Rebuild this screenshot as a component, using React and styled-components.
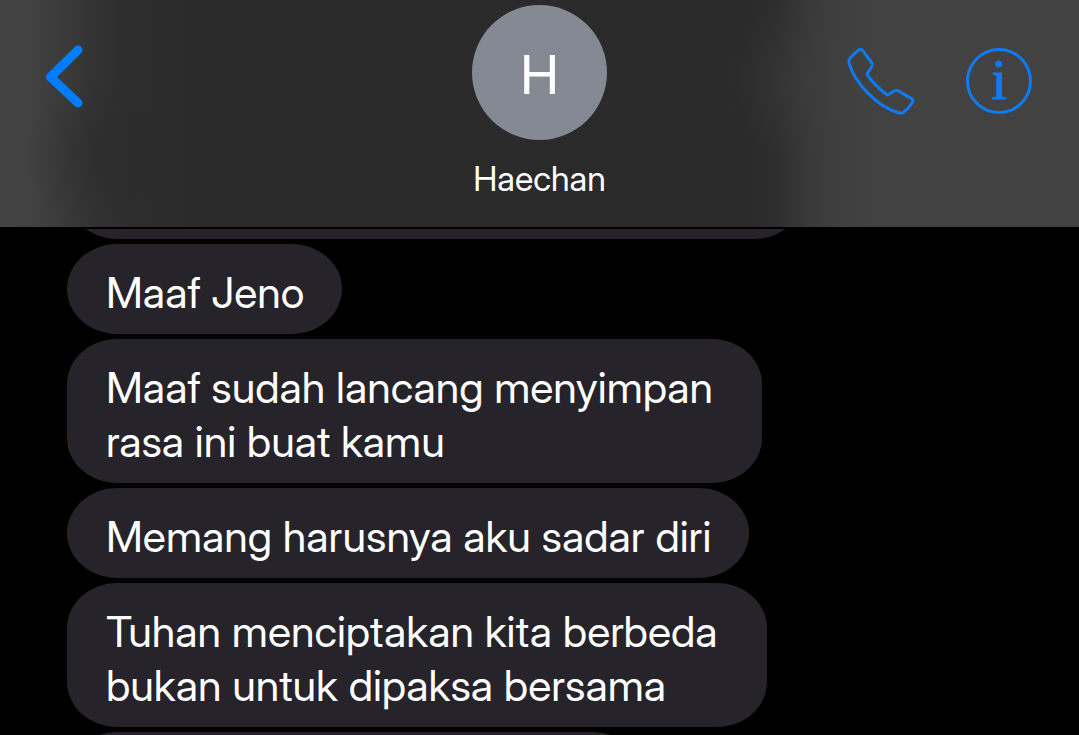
import styled, { createGlobalStyle } from "styled-components";

const GlobalStyle = createGlobalStyle`
  * {
    box-sizing: border-box;
  }

  body {
    margin: 0;
    background: #000000;
    font-family: "Inter Display", Inter, "Liberation Sans", sans-serif;
  }
`;

const StyledPage = styled.div`
  display: flex;
  flex-direction: column;
  height: 100vh;
  overflow: hidden;
  background: #000000;
  color: #ffffff;
`;

const StyledHeader = styled.header`
  position: sticky;
  top: 0;
  z-index: 1;
  display: grid;
  grid-template-columns: 1fr auto 1fr;
  align-items: start;
  flex-shrink: 0;
  padding: 5px 45px 0;
  height: 229px;
  border-bottom: 2px solid #000000;
  background: radial-gradient(
      70px 80px at 9% 68%,
      rgba(40, 40, 40, 0.4),
      rgba(40, 40, 40, 0)
    ),
    radial-gradient(
      80px 80px at 74% 36%,
      rgba(66, 66, 66, 0.35),
      rgba(66, 66, 66, 0)
    ),
    linear-gradient(
      90deg,
      #444444 0%,
      #414141 3%,
      #3a3a3a 6%,
      #323232 9%,
      #2d2d2d 12%,
      #2b2b2b 20%,
      #2a2a2a 69%,
      #2e2e2e 72%,
      #393939 75%,
      #404040 78%,
      #424242 82%
    );
`;

const StyledIconButton = styled.button`
  display: flex;
  padding: 0;
  border: none;
  background: none;
  color: #0f7bf2;
  cursor: pointer;
`;

const StyledBackArea = styled.div`
  padding-top: 37px;
`;

const StyledActions = styled.div`
  display: flex;
  justify-content: flex-end;
  gap: 46px;
  padding-top: 41px;
`;

const StyledContact = styled.div`
  display: flex;
  flex-direction: column;
  align-items: center;
  gap: 17px;
`;

const StyledAvatar = styled.div`
  display: flex;
  justify-content: center;
  align-items: center;
  width: 135px;
  height: 135px;
  padding-top: 4px;
  border-radius: 50%;
  background: #858993;
  font-family: Inter, "Liberation Sans", sans-serif;
  font-size: 54px;
`;

const StyledName = styled.h1`
  margin: 0;
  font-size: 34px;
  font-weight: 400;
  line-height: 44px;
`;

const StyledMessages = styled.main`
  display: flex;
  flex-direction: column;
  align-items: flex-start;
  gap: 5px;
  margin-top: -80px;
  padding: 0 67px;
`;

const StyledBubble = styled.p`
  flex-shrink: 0;
  margin: 0;
  padding: 21px ${({ $multiline }) => ($multiline ? "49px" : "38px")} 15px 39px;
  min-height: 90px;
  width: ${({ $width }) => $width || "auto"};
  border-radius: 50px / 45px;
  background: #26242a;
  font-size: 43px;
  line-height: 54px;
  white-space: pre-line;
`;

const messages = [
  { id: 1, text: "", width: "78%" },
  { id: 2, text: "Maaf Jeno" },
  { id: 3, text: "Maaf sudah lancang menyimpan\nrasa ini buat kamu" },
  { id: 4, text: "Memang harusnya aku sadar diri" },
  { id: 5, text: "Tuhan menciptakan kita berbeda\nbukan untuk dipaksa bersama" },
  { id: 6, text: "", width: "61%" },
];

function BackIcon() {
  return (
    <svg width="42" height="70" viewBox="0 0 42 70" fill="none">
      <path
        d="M33 8 L5.5 35 L33 61"
        stroke="#007cff"
        strokeWidth="9"
        strokeLinecap="round"
        strokeLinejoin="round"
      />
    </svg>
  );
}

function PhoneIcon() {
  return (
    <svg width="72" height="70" viewBox="0 0 72 70" fill="none">
      <path
        d="M12.6 4.2 Q14.8 2 16.6 4.4 L25.8 17 Q26.8 18.4 26 20 L21 28.6 C26 35.8 33.6 43.4 41.4 49 L48.4 45 Q50.6 43.9 52.6 45 L65.4 52.6 Q67.8 54.2 66.4 56.6 C63.6 61.2 60.4 64.4 57.2 66.6 Q55.6 67.5 53 66.8 C32 61.4 8.4 37 3 16.6 Q2.4 14.4 3.8 12.6 Q7.6 7.6 12.6 4.2 Z"
        stroke="currentColor"
        strokeWidth="3"
        strokeLinejoin="round"
      />
    </svg>
  );
}

function InfoIcon() {
  return (
    <svg width="70" height="70" viewBox="0 0 70 70" fill="none">
      <circle cx="35" cy="35" r="31.5" stroke="currentColor" strokeWidth="3" />
      <text
        x="35"
        y="53"
        textAnchor="middle"
        fill="currentColor"
        stroke="currentColor"
        strokeWidth="1"
        fontFamily="Liberation Serif, serif"
        fontSize="56"
      >
        i
      </text>
    </svg>
  );
}

export default function App() {
  return (
    <StyledPage>
      <GlobalStyle />
      <StyledHeader>
        <StyledBackArea>
          <StyledIconButton type="button" aria-label="Kembali">
            <BackIcon />
          </StyledIconButton>
        </StyledBackArea>
        <StyledContact>
          <StyledAvatar>H</StyledAvatar>
          <StyledName>Haechan</StyledName>
        </StyledContact>
        <StyledActions>
          <StyledIconButton type="button" aria-label="Telepon">
            <PhoneIcon />
          </StyledIconButton>
          <StyledIconButton type="button" aria-label="Info">
            <InfoIcon />
          </StyledIconButton>
        </StyledActions>
      </StyledHeader>
      <StyledMessages>
        {messages.map(({ id, text, width }) => (
          <StyledBubble
            key={id}
            $width={width}
            $multiline={text.includes("\n")}
          >
            {text}
          </StyledBubble>
        ))}
      </StyledMessages>
    </StyledPage>
  );
}
